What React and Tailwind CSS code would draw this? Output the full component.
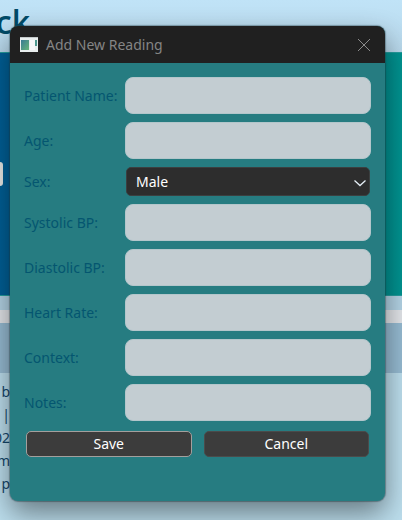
import React from "react";

const inputClass =
  "h-[37px] w-full rounded-lg border border-[#b3c6cb] bg-[#c3cdd2] px-3 text-sm text-[#004b68] outline-none";

function Row({ id, label, children }) {
  return (
    <div className="flex items-center">
      <label htmlFor={id} className="w-[101px] shrink-0 text-sm leading-5 text-[#045670]">
        {label}
      </label>
      <div className="min-w-0 flex-1">{children}</div>
    </div>
  );
}

function TextRow({ id, label }) {
  return (
    <Row id={id} label={label}>
      <input id={id} type="text" className={inputClass} />
    </Row>
  );
}

function WindowIcon() {
  return (
    <svg width="18" height="15" viewBox="0 0 18 15" aria-hidden="true">
      <defs>
        <linearGradient id="pane" x1="0" y1="0" x2="1" y2="1">
          <stop offset="0" stopColor="#397a94" />
          <stop offset="1" stopColor="#67b57a" />
        </linearGradient>
      </defs>
      <rect width="18" height="15" fill="#e9eeee" />
      <rect width="18" height="1" fill="#c4c9ca" />
      <rect x="1" y="3" width="8" height="10" fill="url(#pane)" />
      <rect x="10" y="3" width="5" height="10" fill="#f6f7f8" />
      <rect x="15" y="3" width="2" height="6" fill="#4d988e" />
    </svg>
  );
}

function Backdrop() {
  return (
    <div className="flex min-h-screen flex-col">
      <header className="h-[52px] bg-linear-to-b from-[#c0e3f7] to-[#b9d9ec]">
        <div className="flex w-[30px] justify-end pt-1 font-['Open_Sans',sans-serif] text-[32px] leading-9 font-semibold text-[#004b68]">
          ck
        </div>
      </header>
      <section className="flex h-[244px] items-center border-y border-[#259d9e] bg-linear-to-r from-[#005f96] to-[#009390]">
        <div className="h-6 w-[3px] rounded-r-sm bg-[#e9e9e6]" />
      </section>
      <div className="h-[14px] bg-[#b3d3e5]" />
      <div className="h-[13px] bg-[#e2e5e9]" />
      <div className="h-[50px] bg-[#96bbd2]" />
      <section className="flex-1 bg-[#bcdeed] pt-[7px]">
        <div className="flex w-[10px] flex-col items-end text-sm leading-[23px] text-[#14466b]">
          <span>b</span>
          <span>|</span>
          <span>02</span>
          <span>m</span>
          <span>p</span>
        </div>
      </section>
    </div>
  );
}

export default function App() {
  return (
    <main className="relative min-h-screen overflow-hidden font-['Noto_Sans',sans-serif]">
      <Backdrop />
      <div
        role="dialog"
        aria-labelledby="dialog-title"
        className="absolute top-[26px] right-[17px] left-[10px] overflow-hidden rounded-lg bg-[#267c81] shadow-[0_12px_28px_rgba(0,0,0,0.45),0_0_1px_1px_rgba(40,70,80,0.4)]"
      >
        <div className="flex h-[37px] items-center bg-[#202020] pr-[14px] pl-[10px]">
          <WindowIcon />
          <h1 id="dialog-title" className="flex-1 pl-2 text-sm text-[#858585]">
            Add New Reading
          </h1>
          <button type="button" aria-label="Close" className="text-[#8b8b8b]">
            <svg width="14" height="14" viewBox="0 0 14 14" stroke="currentColor" aria-hidden="true">
              <path d="M1 1 13 13M13 1 1 13" />
            </svg>
          </button>
        </div>
        <form className="flex flex-col gap-2 px-[14px] pt-[14px] pb-11" onSubmit={(e) => e.preventDefault()}>
          <TextRow id="patient" label="Patient Name:" />
          <TextRow id="age" label="Age:" />
          <Row id="sex" label="Sex:">
            <div className="relative px-px">
              <select
                id="sex"
                className="block h-[29px] w-full appearance-none rounded-[5px] border border-[#3b3f40] bg-[#2d2d2d] px-[9px] text-sm text-white outline-none"
              >
                <option>Male</option>
                <option>Female</option>
              </select>
              <svg
                width="14"
                height="8"
                viewBox="0 0 14 8"
                fill="none"
                stroke="#e4edf5"
                strokeWidth="1.3"
                className="pointer-events-none absolute top-3 right-1"
                aria-hidden="true"
              >
                <path d="M1.5 1.5 7 6.5 12.5 1.5" />
              </svg>
            </div>
          </Row>
          <TextRow id="systolic" label="Systolic BP:" />
          <TextRow id="diastolic" label="Diastolic BP:" />
          <TextRow id="heart" label="Heart Rate:" />
          <TextRow id="context" label="Context:" />
          <TextRow id="notes" label="Notes:" />
          <div className="grid grid-cols-2 gap-3 px-0.5 pt-0.5">
            <button
              type="submit"
              className="h-[26px] rounded-[5px] border border-[#a49f9d] bg-[#3c3c3c] text-sm text-white"
            >
              Save
            </button>
            <button
              type="button"
              className="h-[26px] rounded-[5px] border border-[#4b4b4b] bg-[#3c3c3c] text-sm text-white"
            >
              Cancel
            </button>
          </div>
        </form>
      </div>
    </main>
  );
}
